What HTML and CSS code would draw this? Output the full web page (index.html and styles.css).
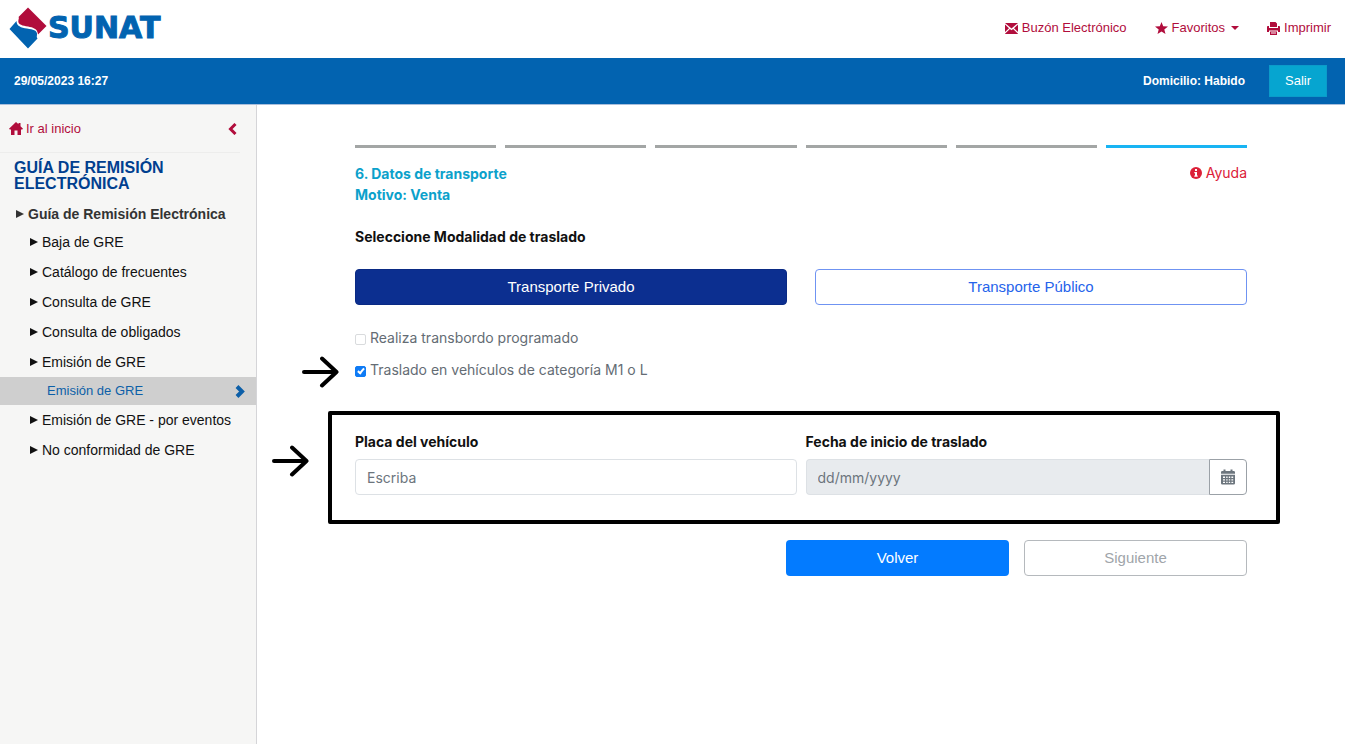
FILE: index.html
```html
<!DOCTYPE html>
<html lang="es">
  <head>
    <meta charset="utf-8" />
    <meta name="viewport" content="width=device-width, initial-scale=1" />
    <title>SUNAT - Guía de Remisión Electrónica</title>
    <link rel="stylesheet" href="styles.css">
  </head>
  <body>
    <header class="header">
      <a href="#" class="logo">
        <svg width="39" height="42" viewBox="0 0 39 42" aria-hidden="true">
          <path fill="#b10d3c" d="M19 0.500L37.500 19L29 27.500C28.500 21.500 24 20.500 19 19.500C13.500 18.800 9.300 17.500 9.300 14.500C9.300 12 10.500 11 9.500 10Z"/>
          <path fill="#0263b0" d="M7.500 14C7.500 19 12 20.800 18 21.500C24.500 22.500 27.500 23.500 28 26.500C28.300 28.500 27 30 28.500 31.500L19 41.500L0.500 22Z"/>
        </svg>
        <span class="logo-text">SUNAT</span>
      </a>
      <nav class="header-links">
        <a href="#buzon" class="header-link">
          <svg width="13" height="11" viewBox="0 0 13 11" aria-hidden="true"><path fill="currentColor" d="M0 0H13L6.500 5.500ZM0 1.600L4 5.200L0 9ZM13 1.600V9L9 5.200ZM4.900 6L6.500 7.300L8.100 6L13 10.800V11H0V10.800Z"/></svg>
          Buzón Electrónico
        </a>
        <a href="#favoritos" class="header-link">
          <svg width="13" height="12" viewBox="0 0 13 12" aria-hidden="true"><path fill="currentColor" d="M6.500 0L8.200 4.300L13 4.500L9.300 7.400L10.500 12L6.500 9.400L2.500 12L3.700 7.400L0 4.500L4.800 4.300Z"/></svg>
          Favoritos
          <span class="caret"></span>
        </a>
        <a href="#imprimir" class="header-link">
          <svg width="13" height="13" viewBox="0 0 13 13" aria-hidden="true"><path fill="currentColor" fill-rule="evenodd" d="M3 0H8.500L10 1.500V5H3ZM0.800 4H2V6H11V4H12.200Q13 4 13 5V10H11V8.500H2V10H0V5Q0 4 0.800 4ZM3 9.500H10V13H3ZM4 10.600V11.600H9V10.600Z"/></svg>
          Imprimir
        </a>
      </nav>
    </header>
    <div class="topbar">
      <span class="topbar-date">29/05/2023 16:27</span>
      <span class="topbar-status">Domicilio: Habido</span>
      <button type="button" class="btn-exit">Salir</button>
    </div>
    <div class="wrap">
      <aside class="sidebar">
        <div class="sidebar-home">
          <a href="#inicio" class="home-link">
            <svg width="14" height="13" viewBox="0 0 14 13" aria-hidden="true"><path fill="currentColor" d="M7 0L9.500 2.300V1H11.500V4.200L14 6.800L13.200 7.500H12V13H8.500V8.500H5.500V13H2V7.500H0.800L0 6.800Z"/></svg>
            Ir al inicio
          </a>
          <button type="button" class="btn-collapse" aria-label="Contraer menú">
            <svg width="9" height="12" viewBox="0 0 9 12" aria-hidden="true"><path fill="none" stroke="currentColor" stroke-width="3" d="M7.500 1L2.500 6L7.500 11"/></svg>
          </button>
        </div>
        <h2 class="sidebar-title">GUÍA DE REMISIÓN ELECTRÓNICA</h2>
        <nav>
          <a href="#guia" class="menu-group">Guía de Remisión Electrónica</a>
          <ul class="menu">
            <li><a href="#baja" class="menu-item">Baja de GRE</a></li>
            <li><a href="#catalogo" class="menu-item">Catálogo de frecuentes</a></li>
            <li><a href="#consulta" class="menu-item">Consulta de GRE</a></li>
            <li><a href="#obligados" class="menu-item">Consulta de obligados</a></li>
            <li>
              <a href="#emision" class="menu-item">Emisión de GRE</a>
              <a href="#emision-gre" class="menu-active">
                Emisión de GRE
                <svg width="10" height="13" viewBox="0 0 10 13" aria-hidden="true"><path fill="none" stroke="currentColor" stroke-width="4" d="M2 1.500L7 6.500L2 11.500"/></svg>
              </a>
            </li>
            <li><a href="#eventos" class="menu-item">Emisión de GRE - por eventos</a></li>
            <li><a href="#conformidad" class="menu-item">No conformidad de GRE</a></li>
          </ul>
        </nav>
      </aside>
      <main class="content">
        <div class="steps">
          <span class="step"></span>
          <span class="step"></span>
          <span class="step"></span>
          <span class="step"></span>
          <span class="step"></span>
          <span class="step current"></span>
        </div>
        <div class="step-head">
          <h1 class="step-title">6. Datos de transporte<br>Motivo: Venta</h1>
          <a href="#ayuda" class="help">
            <svg width="12" height="12" viewBox="0 0 12 12" aria-hidden="true"><circle cx="6" cy="6" r="6" fill="currentColor"/><path fill="#fff" d="M5 2H7V4H5ZM4.300 5H7V8.500H7.700V9.800H4.300V8.500H5V6.200H4.300Z"/></svg>
            Ayuda
          </a>
        </div>
        <form>
          <h2 class="field-title">Seleccione Modalidad de traslado</h2>
          <div class="modes">
            <button type="button" class="btn btn-navy">Transporte Privado</button>
            <button type="button" class="btn btn-outline">Transporte Público</button>
          </div>
          <div class="check-row">
            <input id="transbordo" type="checkbox" class="check">
            <label for="transbordo">Realiza transbordo programado</label>
          </div>
          <div class="check-row">
            <svg class="arrow arrow-check" width="38" height="34" viewBox="0 0 38 34" aria-hidden="true"><path d="M3 17H35.500M21 3.500L35.500 17L21 30.500"/></svg>
            <input id="categoria" type="checkbox" class="check" checked>
            <label for="categoria">Traslado en vehículos de categoría M1 o L</label>
          </div>
          <div class="frame">
            <svg class="arrow arrow-frame" width="38" height="34" viewBox="0 0 38 34" aria-hidden="true"><path d="M3 17H35.500M21 3.500L35.500 17L21 30.500"/></svg>
            <div class="field">
              <label for="placa" class="field-title">Placa del vehículo</label>
              <input id="placa" type="text" class="input" placeholder="Escriba">
            </div>
            <div class="field">
              <label for="fecha" class="field-title">Fecha de inicio de traslado</label>
              <div class="input-group">
                <input id="fecha" type="text" class="input" placeholder="dd/mm/yyyy" readonly>
                <button type="button" class="btn-date" aria-label="Abrir calendario">
                  <svg width="14" height="16" viewBox="0 0 14 16" aria-hidden="true"><path fill="currentColor" fill-rule="evenodd" d="M2.500 0.500H4.500V2H9.500V0.500H11.500V2H12.700Q14 2 14 3.300V4.800H0V3.300Q0 2 1.300 2H2.500ZM0 5.700H14V14.200Q14 15.500 12.700 15.500H1.300Q0 15.500 0 14.200ZM2 7.500V9H4V7.500ZM5.200 7.500V9H6.600V7.500ZM7.800 7.500V9H9.200V7.500ZM10.400 7.500V9H12.200V7.500ZM2 10.200V11.600H4V10.200ZM5.200 10.200V11.600H6.600V10.200ZM7.800 10.200V11.600H9.200V10.200ZM10.400 10.200V11.600H12.200V10.200ZM2 12.800V14H4V12.800ZM5.200 12.800V14H6.600V12.800ZM7.800 12.800V14H9.200V12.800ZM10.400 12.800V14H12.200V12.800Z"/></svg>
                </button>
              </div>
            </div>
          </div>
          <div class="actions">
            <button type="button" class="btn btn-blue">Volver</button>
            <button type="submit" class="btn btn-disabled" disabled>Siguiente</button>
          </div>
        </form>
      </main>
    </div>
  </body>
</html>
```
FILE: styles.css
```css
*,:after,:before{box-sizing:border-box}
body{
  margin:0;
  min-height:100vh;
  display:flex;
  flex-direction:column;
  color:#111;
  background:#fff;
  font:14px/20px 'Liberation Sans',Arial,sans-serif;
}
a{color:inherit;text-decoration:none}
button,input{font:inherit}
button{cursor:pointer}
svg{flex:none}

.header{
  height:58px;
  padding:0 14px 2px 9px;
  display:flex;
  align-items:center;
  justify-content:space-between;
}
.logo{
  display:flex;
  align-items:center;
}
.logo-text{
  color:#0263b0;
  font:bold 30px/32px 'DejaVu Sans',sans-serif;
  -webkit-text-stroke:1px #0263b0;
}
.header-links{
  display:flex;
  gap:28px;
  color:#b10d3c;
  font-size:13px;
}
.header-link{
  display:flex;
  align-items:center;
  gap:4px;
}
.caret{
  margin-left:2px;
  border:4px solid transparent;
  border-top-color:currentColor;
  border-bottom:0;
}

.topbar{
  height:47px;
  padding:0 18px 0 14px;
  display:flex;
  align-items:center;
  color:#fff;
  background:#0263b0;
  border-bottom:1px solid #a9bedb;
  font-size:12px;
  font-weight:bold;
}
.topbar-status{
  margin:0 24px 0 auto;
}
.btn-exit{
  padding:5px 15px;
  color:#fff;
  background:#06a5d0;
  border:1px solid #0b9bc9;
  font-size:13px;
  font-weight:normal;
}

.wrap{
  flex:1;
  display:flex;
}
.sidebar{
  width:257px;
  flex:none;
  background:#f6f6f5;
  border-right:1px solid #d5d5d8;
}
.sidebar-home{
  height:48px;
  margin-right:16px;
  padding-left:9px;
  display:flex;
  align-items:center;
  justify-content:space-between;
  color:#b10d3c;
  border-bottom:1px solid #ededec;
  font-size:13px;
}
.home-link{
  display:flex;
  align-items:center;
  gap:3px;
}
.btn-collapse{
  padding:3px;
  display:flex;
  color:inherit;
  background:none;
  border:0;
}
.sidebar-title{
  margin:0;
  padding:7px 14px 8px;
  color:#003f8f;
  font-size:16px;
  line-height:16px;
}
.menu-group,
.menu-item,
.menu-active{
  display:flex;
  align-items:center;
}
.menu-group{
  height:27px;
  padding-left:16px;
  color:#333;
  font-weight:bold;
}
.menu-group:before,
.menu-item:before{
  content:'';
  margin-right:4px;
  border:4px solid transparent;
  border-left:8px solid currentColor;
  border-right:0;
}
.menu{
  margin:0;
  padding:0;
  list-style:none;
}
.menu-item{
  height:30px;
  padding-left:30px;
}
.menu-active{
  height:28px;
  padding:0 11px 0 47px;
  justify-content:space-between;
  color:#0c5fa8;
  background:#cfcfcf;
  font-size:13px;
}

.content{
  flex:1;
  padding:40px 98px;
  font-family:Inter,'Open Sans',sans-serif;
}
.steps{
  display:grid;
  grid-template-columns:repeat(6,1fr);
  gap:9px;
}
.step{
  height:3px;
  background:#a3a6a5;
}
.step.current{
  background:#18b4f3;
}
.step-head{
  margin:15px 0 22px;
  display:flex;
  align-items:flex-start;
  justify-content:space-between;
}
.step-title,
.field-title{
  margin:0;
  font-size:14px;
  font-weight:700;
}
.step-title{
  color:#0ba1cb;
  line-height:21px;
}
.field-title{
  color:#111;
}
.help{
  display:flex;
  align-items:center;
  gap:4px;
  color:#dc2038;
}
.modes{
  margin:22px 0 23px;
  display:grid;
  grid-template-columns:1fr 1fr;
  gap:28px;
}
.btn{
  height:36px;
  padding:0 12px;
  border:1px solid transparent;
  border-radius:4px;
  font:15px/20px 'Liberation Sans',Arial,sans-serif;
}
.btn-navy{
  color:#fff;
  background:#0c2f90;
  border-color:#0a2a84;
}
.btn-outline{
  color:#2563eb;
  background:#fff;
  border-color:#6f93f2;
}
.btn-blue{
  color:#fff;
  background:#037bff;
}
.btn-disabled{
  color:#a0a5aa;
  background:#fff;
  border-color:#b5b9bd;
}
.check-row{
  position:relative;
  margin-bottom:12px;
  display:flex;
  align-items:center;
  gap:4px;
  color:#646c74;
}
.check{
  appearance:none;
  width:11px;
  height:11px;
  margin:2px 0 0;
  position:relative;
  border:1px solid #d9dbdd;
  border-radius:2px;
  background:#fff;
}
.check:checked{
  background:#0f7bf5;
  border-color:#0f7bf5;
}
.check:checked:after{
  content:'';
  position:absolute;
  left:3px;
  top:0;
  width:4px;
  height:7px;
  border:solid #fff;
  border-width:0 2px 2px 0;
  transform:rotate(40deg);
}
.arrow{
  position:absolute;
  fill:none;
  stroke:#000;
  stroke-width:4;
  stroke-linecap:round;
  stroke-linejoin:round;
}
.arrow-check{
  left:-54px;
  top:-5px;
}
.arrow-frame{
  left:-61px;
  top:29px;
}
.frame{
  position:relative;
  margin:31px -33px 16px -27px;
  padding:17px 29px 25px 23px;
  display:grid;
  grid-template-columns:1fr 1fr;
  gap:9px;
  border:4px solid #000;
  border-radius:2px;
}
.field .field-title{
  display:block;
  margin-bottom:7px;
}
.input{
  width:100%;
  height:36px;
  padding:0 11px;
  color:#495057;
  border:1px solid #dde1e5;
  border-radius:4px;
}
.input::placeholder{
  color:#6c757d;
}
.input-group{
  display:flex;
}
.input-group .input{
  flex:1;
  background:#e8ebee;
  border-right:0;
  border-radius:4px 0 0 4px;
}
.btn-date{
  width:38px;
  height:36px;
  padding:0;
  display:flex;
  align-items:center;
  justify-content:center;
  color:#6c757d;
  background:#fff;
  border:1px solid #9ba1a7;
  border-radius:0 4px 4px 0;
}
.actions{
  display:grid;
  grid-template-columns:1fr 1fr;
  gap:15px;
  width:calc(50% + 15px);
  margin-left:auto;
}
```
